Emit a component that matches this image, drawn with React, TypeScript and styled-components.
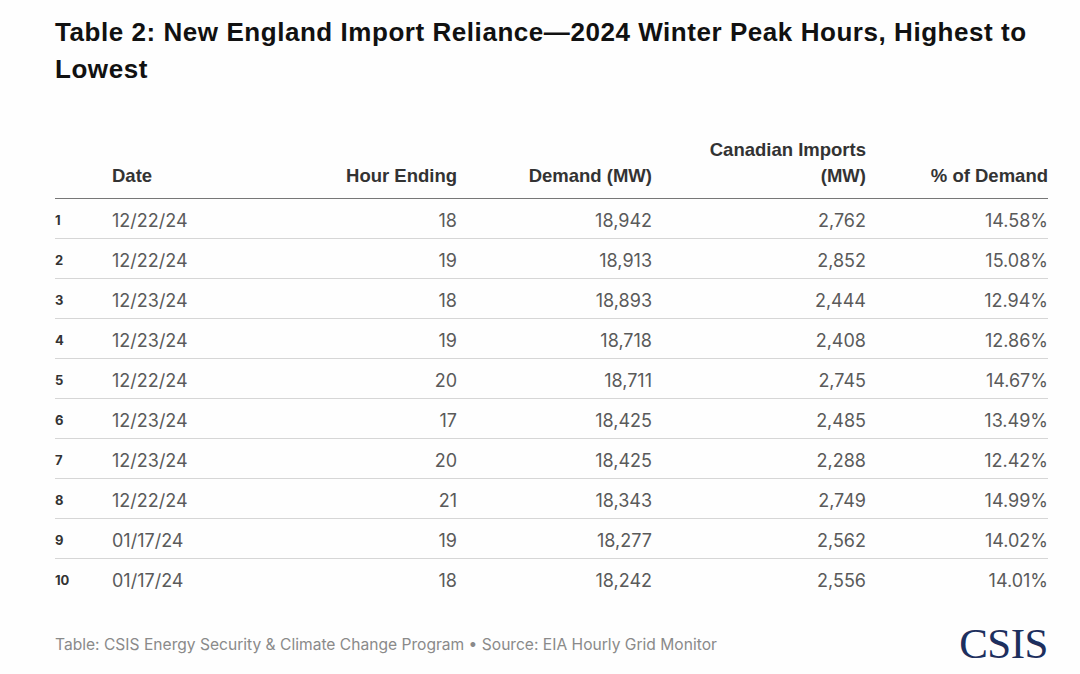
import React from 'react';
import styled, {createGlobalStyle} from 'styled-components';

const GlobalStyle = createGlobalStyle`
  html, body {
    margin: 0;
    background: #fefefe;
  }
  body {
    font-family: Inter, "Liberation Sans", Arial, sans-serif;
  }
`;

interface Row {
  date: string;
  hour: number;
  demand: string;
  imports: string;
  pct: string;
}

const rows: Row[] = [
  {date: '12/22/24', hour: 18, demand: '18,942', imports: '2,762', pct: '14.58%'},
  {date: '12/22/24', hour: 19, demand: '18,913', imports: '2,852', pct: '15.08%'},
  {date: '12/23/24', hour: 18, demand: '18,893', imports: '2,444', pct: '12.94%'},
  {date: '12/23/24', hour: 19, demand: '18,718', imports: '2,408', pct: '12.86%'},
  {date: '12/22/24', hour: 20, demand: '18,711', imports: '2,745', pct: '14.67%'},
  {date: '12/23/24', hour: 17, demand: '18,425', imports: '2,485', pct: '13.49%'},
  {date: '12/23/24', hour: 20, demand: '18,425', imports: '2,288', pct: '12.42%'},
  {date: '12/22/24', hour: 21, demand: '18,343', imports: '2,749', pct: '14.99%'},
  {date: '01/17/24', hour: 19, demand: '18,277', imports: '2,562', pct: '14.02%'},
  {date: '01/17/24', hour: 18, demand: '18,242', imports: '2,556', pct: '14.01%'},
];

const Page = styled.div`
  width: 1080px;
  height: 674px;
  box-sizing: border-box;
  padding: 14px 32px 0 55px;
  display: flex;
  flex-direction: column;
`;

const Title = styled.h1`
  margin: 0;
  font-family: "Liberation Sans", Arial, sans-serif;
  font-size: 26px;
  line-height: 37px;
  font-weight: 700;
  letter-spacing: 0.55px;
  color: #111;
`;

const Table = styled.table`
  margin-top: 49px;
  width: 993px;
  border-collapse: collapse;
  table-layout: fixed;
`;

const Th = styled.th<{ $align?: 'left' | 'right' }>`
  text-align: ${p => p.$align || 'right'};
  vertical-align: bottom;
  font-family: "Liberation Sans", Arial, sans-serif;
  font-size: 18.5px;
  line-height: 26px;
  font-weight: 700;
  color: #333;
  padding: 0 0 9px;
  border-bottom: 1.5px solid #777;
`;

const Td = styled.td<{ $align?: 'left' | 'right' }>`
  text-align: ${p => p.$align || 'right'};
  font-size: 18px;
  color: #5a5a5a;
  height: 36px;
  padding: 3px 0 0;
  border-bottom: 1px solid #d6d6d6;
`;

const Tr = styled.tr`
  &:last-child td {
    border-bottom: none;
  }
`;

const Rank = styled(Td)`
  font-size: 13px;
  font-weight: 700;
  color: #333;
`;

const Footer = styled.div`
  margin-top: 24px;
  display: flex;
  justify-content: space-between;
  align-items: center;
  width: 993px;
`;

const Source = styled.span`
  font-size: 15.6px;
  color: #8a8a8a;
`;

const Logo = styled.span`
  font-family: "Liberation Serif", "Times New Roman", serif;
  font-size: 43px;
  color: #1d2f5e;
  letter-spacing: -0.5px;
  line-height: 44px;
`;

export default function App() {
  return (
    <>
      <GlobalStyle/>
      <Page>
        <Title>Table 2: New England Import Reliance—2024 Winter Peak Hours, Highest to Lowest</Title>
        <Table>
          <colgroup>
            <col style={{width: 57}}/>
            <col style={{width: 200}}/>
            <col style={{width: 145}}/>
            <col style={{width: 195}}/>
            <col style={{width: 214}}/>
            <col style={{width: 182}}/>
          </colgroup>
          <thead>
            <tr>
              <Th $align="left"></Th>
              <Th $align="left">Date</Th>
              <Th>Hour Ending</Th>
              <Th>Demand (MW)</Th>
              <Th>Canadian Imports<br/>(MW)</Th>
              <Th>% of Demand</Th>
            </tr>
          </thead>
          <tbody>
            {rows.map((r, i) =>
              <Tr key={i}>
                <Rank $align="left">{i + 1}</Rank>
                <Td $align="left">{r.date}</Td>
                <Td>{r.hour}</Td>
                <Td>{r.demand}</Td>
                <Td>{r.imports}</Td>
                <Td>{r.pct}</Td>
              </Tr>
            )}
          </tbody>
        </Table>
        <Footer>
          <Source>Table: CSIS Energy Security &amp; Climate Change Program • Source: EIA Hourly Grid Monitor</Source>
          <Logo>CSIS</Logo>
        </Footer>
      </Page>
    </>
  );
}
